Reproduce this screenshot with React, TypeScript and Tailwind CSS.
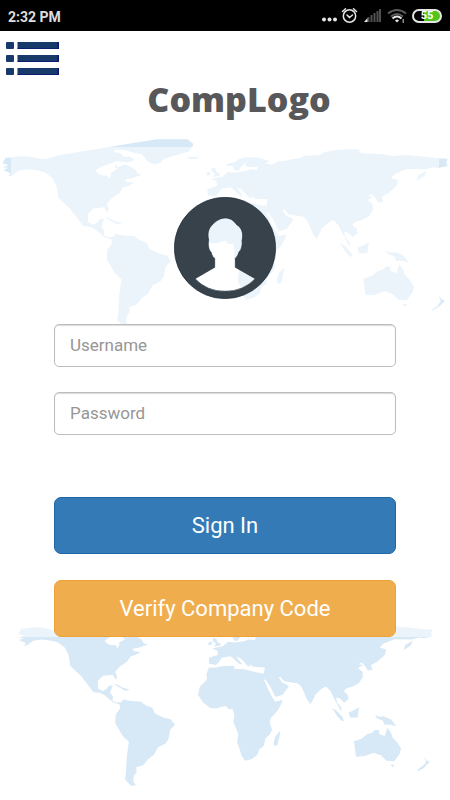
function WorldMap() {
  return (
    <>
      <path d="M8 100 L16 84 L35 82 C50 79 65 78 80 79 C100 81 115 88 130 87 C150 87 162 78 185 74 L340 49 L470 28 L562 28 L580 42 L578 48 L566 65 L540 72 L512 80 L490 88 L482 98 L465 103 L448 98 L435 85 L425 72 L400 68 L375 60 L345 58 L341 66 L360 70 L372 80 L390 80 L405 90 L385 97 L350 94 L345 100 L355 112 L375 103 L392 110 L405 118 L412 130 L425 135 L395 145 L376 148 L380 156 L403 158 L385 168 L370 172 L358 190 L335 205 L320 222 L326 238 L322 249 L312 232 L300 233 L280 235 L264 252 L264 276 L280 284 L292 278 L298 268 L312 266 L304 290 L313 302 L311 316 L326 322 L335 320 L330 327 L312 320 L285 297 L270 290 L250 288 L240 275 L225 255 L205 232 L175 203 L170 170 L158 145 L135 127 L110 121 L80 118 L55 122 L40 134 L26 140 L32 130 L18 124 L10 120 L26 113 L8 112 L26 106 Z" />
      <path fill="#ffffff" d="M285 123 L298 113 L320 104 L338 98 L350 92 L348 102 L344 112 L352 117 L340 124 L333 128 L333 136 L327 146 L322 137 L300 135 Z" />
      <path fill="#ffffff" d="M209 233 L228 264 L221 264 L204 236 Z" />
      <path d="M314 261 L330 265 L342 273 L368 279 L352 283 L338 275 Z M560 82 L600 80 L590 86 L568 87 Z" />
      <path d="M327 322 L338 321 L348 311 L358 315 L382 317 L402 318 L418 330 L440 338 L447 356 L475 370 L498 375 L513 392 L497 410 L492 438 L482 454 L458 466 L445 490 L425 505 L410 524 L388 530 L389 546 L380 558 L378 575 L387 589 L370 589 L352 570 L355 545 L357 500 L364 448 L345 430 L320 388 L322 360 L336 340 L334 328 Z" />
      <g transform="translate(675 0)">
        <path d="M-53 177 L-52 196 L-30 200 L-17 187 L-12 177 L15 172 L24 177 L37 190 L48 199 L54 195 L44 186 L36 174 L48 178 L58 187 L71 202 L80 207 L78 198 L91 206 L128 208 L124 230 L100 224 L60 214 L-53 208 L-62 235 L120 290 L160 300 L166 303 L185 296 L205 270 L200 265 L184 257 L172 240 L178 238 L190 253 L235 260 L245 270 L252 283 L262 308 L275 327 L287 305 L289 297 L310 278 L325 270 L340 285 L352 310 L362 328 L374 350 L375 338 L360 320 L358 305 L370 308 L384 322 L398 309 L395 296 L382 285 L389 277 L410 270 L430 260 L444 240 L443 222 L428 210 L445 200 L429 198 L440 192 L452 205 L460 218 L475 216 L470 200 L490 190 L515 168 L519 150 L498 144 L510 132 L545 117 L600 118 L625 112 L640 114 L668 108 L664 96 L668 86 L640 85 L600 80 L545 75 L500 78 L470 72 L410 70 L400 64 L412 60 L380 57 L330 60 L300 66 L285 75 L240 77 L225 84 L200 88 L180 93 L160 94 L140 104 L120 100 L134 93 L100 83 L60 82 L42 88 L28 97 L5 102 L6 109 L22 107 L29 121 L40 122 L50 108 L65 97 L60 108 L72 112 L98 110 L96 120 L76 118 L60 124 L40 127 L25 128 L10 125 L-8 140 L-42 147 L-25 154 L-24 168 Z" />
        <path d="M-40 113 L-29 115 L-25 127 L-13 133 L-18 138 L-36 141 L-29 132 L-40 123 Z M-56 130 L-45 124 L-42 132 L-52 138 Z" />
        <path d="M576 152 L580 136 L605 122 L598 138 Z" />
        <path d="M345 338 L362 350 L378 368 L384 381 L374 379 L360 364 Z M398 353 L410 349 L432 337 L427 370 L402 370 Z M483 362 L500 368 L510 366 L535 376 L552 398 L530 392 L514 393 L508 379 L490 373 Z" />
        <path d="M415 446 L440 438 L457 424 L472 420 L485 409 L497 412 L496 422 L514 430 L523 403 L535 420 L540 435 L555 450 L567 470 L562 488 L545 511 L520 509 L503 492 L478 483 L450 494 L422 496 Z M533 522 L547 522 L540 530 Z M642 497 L650 508 L660 513 L650 522 L640 533 L622 542 L619 539 L640 523 L648 515 Z" />
        <path d="M178 412 L175 430 L168 460 L158 461 L156 450 L162 430 Z" />
      </g>
      <g transform="scale(1.0753) translate(522 96.3)">
        <path d="M58 100 L75 98 L100 93 L131 92 L134 103 L163 115 L167 108 L180 112 L224 116 L228 132 L242 160 L254 189 L258 199 L277 194 L274 206 L262 228 L243 248 L239 262 L246 284 L240 297 L226 312 L221 333 L208 343 L202 359 L186 372 L165 377 L155 362 L148 340 L141 322 L145 297 L130 260 L133 240 L128 222 L115 222 L108 213 L92 216 L82 220 L62 220 L40 203 L24 180 L29 156 L50 135 L52 118 Z" />
        <path fill="#ffffff" d="M221 132 L228 136 L240 154 L250 173 L256 188 L263 191 L276 188 L277 194 L256 200 L244 182 L234 162 Z" />
      </g>
    </>
  );
}

function Backdrop() {
  return (
    <svg
      className="absolute inset-x-0 top-0 w-full"
      viewBox="0 0 450 800"
      fill="#d7e8f6"
      aria-hidden="true"
    >
      <g transform="translate(0 130) scale(0.3333)">
        <WorldMap />
      </g>
      <g transform="translate(16 602.9) scale(0.31)">
        <WorldMap />
      </g>
    </svg>
  );
}

function StatusBar() {
  return (
    <div className="relative flex h-[31px] items-center justify-between bg-black px-2 text-[#dedede]">
      <span className="pt-[2px] text-[14px] leading-none font-bold">2:32 PM</span>
      <div className="flex items-center">
        <svg width="90" height="31" viewBox="0 0 90 31" aria-hidden="true">
          <g fill="#e6e6e6">
            <circle cx="6" cy="19.500" r="2" />
            <circle cx="11.500" cy="19.500" r="2" />
            <circle cx="17" cy="19.500" r="2" />
          </g>
          <g fill="none" stroke="#e6e6e6" strokeWidth="1.5" strokeLinecap="round">
            <circle cx="31.500" cy="16" r="6.200" />
            <path d="M29 15 L31.500 17.500 L34.500 15 M24.500 11.500 L27.500 8.800 M38.500 11.500 L35.500 8.800" />
          </g>
          <path fill="#505050" d="M49.500 17h2v5h-2z M52.500 15h2v7h-2z M55.500 13h2v9h-2z M58.500 11h2v11h-2z M61 9h2v13h-2z" />
          <path fill="#e6e6e6" d="M46 22 L49.500 18 V22 Z" />
          <g fill="none" strokeWidth="2">
            <path stroke="#5a5a5a" d="M70 13.500 Q79 6.500 88 13.500 M73 16.500 Q79 11.500 85 16.500" />
            <path stroke="#e6e6e6" d="M74.500 18.500 Q79 14.500 83.500 18.500" />
          </g>
          <path fill="#e6e6e6" d="M77 20.500 Q79 18.500 81 20.500 L79 22.500 Z" />
          <path fill="#8a8a8a" d="M84.500 19h1.500v4h-1.500z" />
        </svg>
        <div className="ml-1 flex h-[14px] w-[30px] items-center justify-center rounded-full border-2 border-[#e6e6e6] bg-linear-to-r from-black from-40% to-[#52c41a] to-40% text-[11px] leading-none font-bold text-white">
          55
        </div>
      </div>
    </div>
  );
}

function MenuIcon() {
  return (
    <svg className="block" width="53" height="33" viewBox="0 0 53 33" fill="#173a6b" aria-hidden="true">
      {[0, 13, 26].map((y) => (
        <g key={y}>
          <rect x="0" y={y} width="8" height="7" rx="1" />
          <rect x="11.500" y={y} width="41.500" height="7" />
          <path fill="#0a1570" d={`M11.500 ${y + 6.3}h40v-6.300h1.500v7h-41.500z`} />
        </g>
      ))}
    </svg>
  );
}

function Avatar() {
  return (
    <svg className="mx-auto block" width="102" height="102" viewBox="27 21 306 306" aria-hidden="true">
      <path
        fill="#37424b"
        stroke="#1c2c3a"
        strokeWidth="2"
        fillRule="evenodd"
        d="M180 22 A152 152 0 1 1 180 326 A152 152 0 1 1 180 22 Z M180 84 C163 84 146 97 134 114 C128 126 128 138 131 150 C128 162 131 182 138 186 C141 197 144 203 149 205 V232 L90 266 Q125 304 180 304 Q235 304 271 266 L211 232 V205 C216 201 220 194 222 186 C230 180 233 162 231 152 C236 130 231 113 215 104 C205 90 195 84 180 84 Z"
      />
    </svg>
  );
}

const fieldClass =
  "block h-[43px] w-full rounded-[5px] border border-[#bdbdbd] bg-white px-[15px] pb-[2px] text-[17px] text-[#555555] shadow-[inset_0_1px_1px_rgba(0,0,0,0.15)] outline-none placeholder:text-[#969696]";

export default function App() {
  return (
    <div className="relative min-h-screen overflow-hidden bg-white font-['Roboto',sans-serif]">
      <Backdrop />
      <StatusBar />
      <div className="relative">
        <header className="h-[116px] pt-[11px]">
          <button type="button" aria-label="Menu" className="ml-[6px] block">
            <MenuIcon />
          </button>
          <h1 className="pl-7 text-center font-['Open_Sans',sans-serif] text-[34px] leading-[48px] font-extrabold text-[#58585a]">
            CompLogo
          </h1>
        </header>
        <form className="mx-[11px] bg-white/50 px-[43px] pt-[50px]">
          <Avatar />
          <div className="mt-[25px] flex flex-col gap-[25px]">
            <input type="text" aria-label="Username" placeholder="Username" className={fieldClass} />
            <input type="password" aria-label="Password" placeholder="Password" className={fieldClass} />
          </div>
          <div className="mt-[62px] flex flex-col gap-[26px] text-[22px] text-white">
            <button type="button" className="h-[57px] rounded-[7px] border border-[#1f66a6] bg-[#337ab7]">
              Sign In
            </button>
            <button type="button" className="h-[57px] rounded-[7px] border border-[#eea236] bg-[#f0ad4e]">
              Verify Company Code
            </button>
          </div>
        </form>
      </div>
    </div>
  );
}
